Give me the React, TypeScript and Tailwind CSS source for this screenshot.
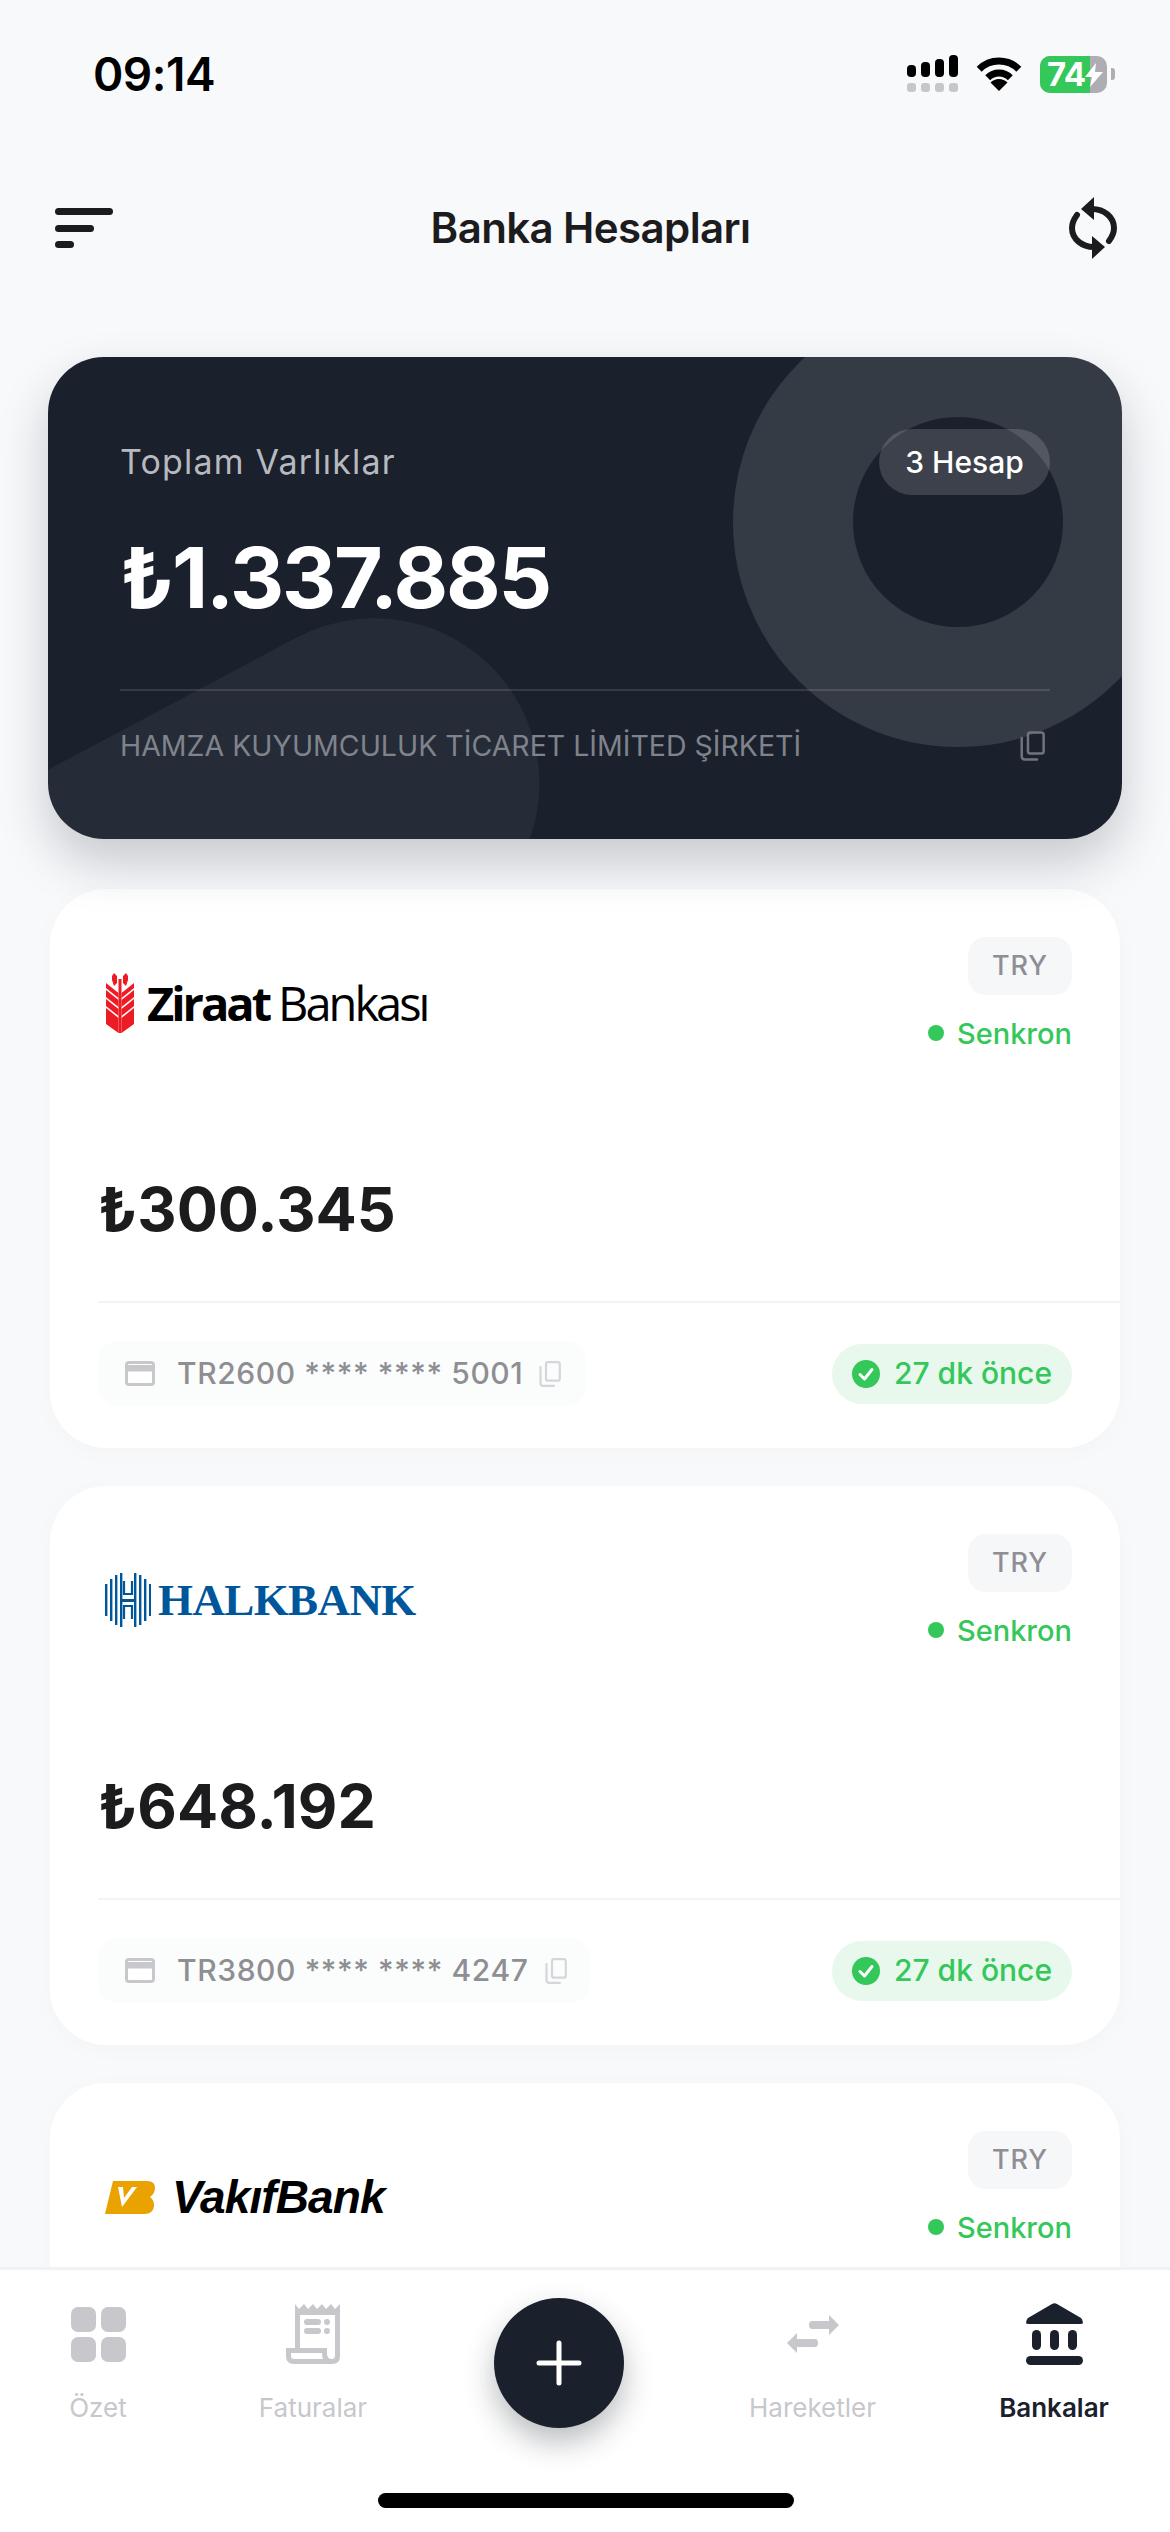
const inter = 'font-["Inter",sans-serif]';

function Signal() {
  return (
    <svg width="52" height="38" viewBox="0 0 52 38">
      <rect x="1" y="10" width="9" height="12" rx="4" fill="#000" />
      <rect x="15" y="7" width="9" height="15" rx="4" fill="#000" />
      <rect x="29" y="4" width="9" height="18" rx="4" fill="#000" />
      <rect x="43" y="0" width="9" height="22" rx="4" fill="#000" />
      <rect x="1" y="28" width="9" height="9" rx="3" fill="#c7c7c7" />
      <rect x="15" y="28" width="9" height="9" rx="3" fill="#c7c7c7" />
      <rect x="29" y="28" width="9" height="9" rx="3" fill="#c7c7c7" />
      <rect x="43" y="28" width="9" height="9" rx="3" fill="#c7c7c7" />
    </svg>
  );
}

function Wifi() {
  return (
    <svg width="48" height="36" viewBox="0 0 48 36">
      <path d="M4.2 13.2A28 28 0 0 1 43.8 13.2" fill="none" stroke="#000" strokeWidth="7" strokeLinecap="butt" />
      <path d="M12.7 21.7A16 16 0 0 1 35.3 21.7" fill="none" stroke="#000" strokeWidth="7" strokeLinecap="butt" />
      <path d="M24 35L15.5 26.5A12 12 0 0 1 32.5 26.5Z" fill="#000" />
    </svg>
  );
}

function Battery() {
  return (
    <div className="flex items-center gap-[4px]">
      <div className="relative h-[37px] w-[67px] overflow-hidden rounded-[10px] bg-[#aeaeb2]">
        <div className="flex h-full w-[50px] items-center bg-[#34c759] pl-[7px]">
          <span className={`${inter} text-[33px] font-bold leading-none tracking-[-0.5px] text-white`}>74</span>
        </div>
        <svg className="absolute left-[45px] top-[7px]" width="18" height="24" viewBox="0 0 18 24">
          <path d="M11 0L0 14H7L5 24L18 9H10Z" fill="#fff" />
        </svg>
      </div>
      <div className="h-[12px] w-[4px] rounded-r-[3px] bg-[#aeaeb2]" />
    </div>
  );
}

function MenuIcon() {
  return (
    <svg width="58" height="40" viewBox="0 0 58 40">
      <rect x="0" y="0" width="58" height="7" rx="3.5" fill="#1c1c1e" />
      <rect x="0" y="17" width="39" height="7" rx="3.5" fill="#1c1c1e" />
      <rect x="0" y="33" width="19" height="7" rx="3.5" fill="#1c1c1e" />
    </svg>
  );
}

function SyncIcon() {
  return (
    <svg width="50" height="62" viewBox="0 0 50 62">
      <path d="M24 12C36 12 46 20 46 31C46 36 44 40 41 44" fill="none" stroke="#1c1c1e" strokeWidth="6" strokeLinecap="round" />
      <path d="M26 50C14 50 4 42 4 31C4 26 6 22 9 18" fill="none" stroke="#1c1c1e" strokeWidth="6" strokeLinecap="round" />
      <path d="M26 0L13 12L26 23Z" fill="#1c1c1e" strokeLinejoin="round" />
      <path d="M24 39L37 50L24 62Z" fill="#1c1c1e" strokeLinejoin="round" />
    </svg>
  );
}

function CopyIcon({ color, w = 22, h = 26 }: { color: string; w?: number; h?: number }) {
  return (
    <svg width={w} height={h} viewBox="0 0 22 26" fill="none">
      <rect x="7" y="1.2" width="13.8" height="18.5" rx="2" stroke={color} strokeWidth="2.2" />
      <path d="M1.5 6V22C1.5 23.6 2.6 24.8 4.2 24.8H15" stroke={color} strokeWidth="2.2" strokeLinecap="round" />
    </svg>
  );
}

function CardIcon() {
  return (
    <svg width="30" height="25" viewBox="0 0 30 25">
      <rect x="1.5" y="1.5" width="27" height="22" rx="2.5" fill="#fff" stroke="#c7c7cc" strokeWidth="3" />
      <rect x="1.5" y="4" width="27" height="6.5" fill="#c7c7cc" />
    </svg>
  );
}

function CheckIcon() {
  return (
    <svg width="28" height="28" viewBox="0 0 28 28">
      <circle cx="14" cy="14" r="14" fill="#34c759" />
      <path d="M8 14.5L12.5 19L20 9.5" fill="none" stroke="#fff" strokeWidth="3" strokeLinecap="round" strokeLinejoin="round" />
    </svg>
  );
}

function ZiraatLogo() {
  return (
    <div className="flex h-[60px] w-[288px] items-center">
      <svg className="ml-[8px] shrink-0" width="28" height="60" viewBox="0 0 28 60">
        <path d="M8 0L11 3V10L8 13L6 7V3Z M20 0L17 3V10L20 13L22 7V3Z" fill="#ed1c24" />
        <path d="M0 10L12.5 20V25L0 15Z M28 10L15.5 20V25L28 15Z" fill="#ed1c24" />
        <path d="M0 17L12.5 27V34L0 24Z M28 17L15.5 27V34L28 24Z" fill="#ed1c24" />
        <path d="M0 26L12.5 36V43L0 33Z M28 26L15.5 36V43L28 33Z" fill="#ed1c24" />
        <path d="M0 35L12.5 45V60L0 51Z M28 35L15.5 45V60L28 51Z" fill="#ed1c24" />
        <rect x="12.5" y="6" width="3" height="54" fill="#ed1c24" />
      </svg>
      <span className="ml-[13px] whitespace-nowrap font-['Open_Sans',sans-serif] text-[47px] leading-none tracking-[-3px] text-black">
        <span className="font-bold">Ziraat</span>
        <span className="ml-[9px] font-normal">Bankası</span>
      </span>
    </div>
  );
}

function HalkMark() {
  const bars = [
    [0, 16, 38], [5, 11, 48], [10, 7, 47], [15, 2, 52],
    [30, 2, 52], [35, 7, 47], [40, 11, 48], [45, 16, 38],
  ];
  return (
    <svg className="shrink-0" width="46" height="54" viewBox="0 0 46 54">
      {[[0, 11, 32], [5, 6, 42], [10, 2, 50], [15, 0, 54], [29, 0, 54], [34, 2, 50], [39, 6, 42], [44, 11, 32]].map(([x, y, h], i) => (
        <rect key={i} x={x} y={y} width="2.4" height={h} fill="#00569b" />
      ))}
      <rect x="15" y="26" width="16" height="3" fill="#00569b" />
      <path d="M19 8V21H27V8" fill="none" stroke="#00569b" strokeWidth="2.2" />
      <path d="M19 46V33H27V46" fill="none" stroke="#00569b" strokeWidth="2.2" />
      {bars.length === 0 ? null : null}
    </svg>
  );
}

function HalkLogo() {
  return (
    <div className="flex h-[60px] w-[288px] items-center pl-[7px]">
      <HalkMark />
      <span className="ml-[7px] whitespace-nowrap font-['Liberation_Serif',serif] text-[45px] font-bold leading-none tracking-[-0.6px] text-[#00569b]">
        HALKBANK
      </span>
    </div>
  );
}

function VakifLogo() {
  return (
    <div className="flex h-[60px] w-[288px] items-center pl-[7px]">
      <svg className="shrink-0" width="50" height="33" viewBox="0 0 50 33">
        <path d="M8 0H42C48 0 50 3 50 7C50 11 48 14 45 16C48 18 49 21 49 24C49 30 45 33 39 33H0Z" fill="#e9a200" />
        <path d="M13 6L17 26L32 6H27L19 17L18 6Z" fill="#fff" />
      </svg>
      <span className="ml-[17px] whitespace-nowrap font-['Liberation_Sans',sans-serif] text-[46px] font-bold italic leading-none tracking-[-0.9px] text-black">
        VakıfBank
      </span>
    </div>
  );
}

function BankCard({
  logo,
  amount,
  iban,
  chipClass,
}: {
  logo: React.ReactNode;
  amount: string;
  iban: string;
  chipClass: string;
}) {
  return (
    <div className="rounded-[56px] bg-white pb-[42px] pl-[48px] pr-[48px] pt-[48px] shadow-[0_4px_24px_rgba(0,0,0,0.025)]">
      <div className="flex items-start justify-between">
        <div className="mt-[36px]">{logo}</div>
        <div className="flex flex-col items-end">
          <div className={`${inter} flex h-[58px] w-[104px] items-center justify-center rounded-[18px] bg-[#f6f7f9] text-[27px] font-medium tracking-[1px] text-[#8e8e93]`}>
            TRY
          </div>
          <div className="mt-[20px] flex h-[36px] items-center gap-[13px]">
            <span className="h-[16px] w-[16px] rounded-full bg-[#34c759]" />
            <span className={`${inter} text-[29px] font-medium leading-none text-[#34c759]`}>Senkron</span>
          </div>
        </div>
      </div>
      <div className={`${inter} mt-[122px] text-[61px] font-bold leading-[72px] text-[#1c1c1e]`}>{amount}</div>
      <div className="mr-[-48px] mt-[56px] h-[2px] bg-[#f3f4f6]" />
      <div className="mt-[38px] flex items-center justify-between">
        <div className={`flex h-[65px] items-center rounded-[20px] bg-[#fbfcfc] pl-[27px] ${chipClass}`}>
          <CardIcon />
          <span className={`${inter} ml-[22px] whitespace-nowrap text-[30px] font-medium tracking-[0.6px] text-[#8e8e93]`}>{iban}</span>
          <span className="ml-[16px]">
            <CopyIcon color="#d6d6da" />
          </span>
        </div>
        <div className="flex h-[60px] w-[240px] items-center justify-center gap-[14px] rounded-[30px] bg-[#e8f8ed]">
          <CheckIcon />
          <span className={`${inter} whitespace-nowrap text-[30px] font-medium text-[#34c759]`}>27 dk önce</span>
        </div>
      </div>
    </div>
  );
}

function NavLabel({ children, active }: { children: React.ReactNode; active?: boolean }) {
  return (
    <span className={`${inter} mt-[20px] whitespace-nowrap text-[26px] leading-[36px] ${active ? "font-semibold text-[#1a202c]" : "font-normal text-[#c7c7cc]"}`}>
      {children}
    </span>
  );
}

export default function App() {
  return (
    <div className={`${inter} flex h-[2532px] w-[1170px] flex-col overflow-hidden bg-[#f8f9fb]`}>
      {/* Status bar */}
      <div className="flex h-[148px] shrink-0 items-center justify-between pl-[93px] pr-[55px]">
        <span className="text-[46px] font-semibold leading-none tracking-[-0.5px] text-black">09:14</span>
        <div className="flex items-center">
          <Signal />
          <div className="ml-[17px]"><Wifi /></div>
          <div className="ml-[17px]"><Battery /></div>
        </div>
      </div>
      {/* Header */}
      <div className="flex h-[160px] shrink-0 items-center justify-between pl-[55px] pr-[52px]">
        <MenuIcon />
        <span className="text-[42px] font-semibold leading-none tracking-[-0.6px] text-[#1c1c1e]">Banka Hesapları</span>
        <SyncIcon />
      </div>
      {/* Scrolling content */}
      <div className="min-h-0 flex-1 overflow-hidden">
        {/* Hero */}
        <div className="relative z-10 mx-[48px] mt-[49px] h-[482px] overflow-visible rounded-[56px] shadow-[0_24px_50px_rgba(26,32,44,0.22)]">
          <div className="relative h-full overflow-hidden rounded-[56px] bg-[#1a202c] px-[72px] pt-[72px]">
            <div className="absolute left-[685px] top-[-60px] h-[450px] w-[450px] rounded-full border-[120px] border-white/12" />
            <div className="absolute left-[-187px] top-[348px] h-[330px] w-[700px] rotate-[-28deg] rounded-full bg-white/5" />
            <div className="relative">
              <div className="flex items-center justify-between">
                <span className="text-[34px] font-normal leading-none tracking-[1.2px] text-[#b7b9be]">Toplam Varlıklar</span>
                <span className="flex h-[66px] w-[171px] items-center justify-center rounded-[33px] bg-white/15 text-[30px] font-medium text-white">3 Hesap</span>
              </div>
              <div className="mt-[33px] text-[84px] font-bold leading-[100px] tracking-[-2.2px] text-white">₺1.337.885</div>
              <div className="mt-[61px] h-[2px] bg-white/12" />
              <div className="mt-[35px] flex h-[40px] items-center justify-between pr-[5px]">
                <span className="text-[28.5px] font-normal leading-none text-[#7f838b]">HAMZA KUYUMCULUK TİCARET LİMİTED ŞİRKETİ</span>
                <CopyIcon color="#6f737c" w={25} h={30} />
              </div>
            </div>
          </div>
        </div>
        {/* Cards */}
        <div className="mx-[50px] mt-[50px] flex flex-col gap-[38px]">
          <BankCard logo={<ZiraatLogo />} amount="₺300.345" iban="TR2600 **** **** 5001" chipClass="w-[488px]" />
          <BankCard logo={<HalkLogo />} amount="₺648.192" iban="TR3800 **** **** 4247" chipClass="w-[492px]" />
          <BankCard logo={<VakifLogo />} amount="₺0" iban="TR0000 **** **** 0000" chipClass="w-[488px]" />
        </div>
      </div>
      {/* Bottom nav */}
      <div className="relative z-20 h-[265px] shrink-0 border-t-[3px] border-[#f1f2f4] bg-white">
        <div className="flex items-start gap-[126px] pl-[64px] pt-[28px]">
          <div className="flex w-[68px] flex-col items-center">
            <div className="flex h-[72px] items-center">
              <div className="grid grid-cols-2 gap-[5px]">
                <span className="h-[25px] w-[25px] rounded-[7px] bg-[#c7c7cc]" />
                <span className="h-[25px] w-[25px] rounded-[7px] bg-[#c7c7cc]" />
                <span className="h-[25px] w-[25px] rounded-[7px] bg-[#c7c7cc]" />
                <span className="h-[25px] w-[25px] rounded-[7px] bg-[#c7c7cc]" />
              </div>
            </div>
            <NavLabel>Özet</NavLabel>
          </div>
          <div className="flex w-[110px] flex-col items-center">
            <div className="flex h-[72px] items-center">
              <svg width="54" height="60" viewBox="0 0 54 60">
                <path
                  fillRule="evenodd"
                  fill="#c7c7cc"
                  d="M9 0L13 5L18 0L22 5L27 0L31 5L36 0L40 5L45 0L49 5L54 0V52Q54 60 46 60H8Q0 60 0 52V44H9ZM14 11V44H41V50Q41 55 46 55Q49 55 49 51V11ZM5 49V52Q5 55 8 55H37Q36 53 36 49Z"
                />
                <rect x="18" y="15" width="17" height="6" rx="3" fill="#c7c7cc" />
                <rect x="38" y="15" width="6" height="6" rx="3" fill="#c7c7cc" />
                <rect x="18" y="24" width="17" height="6" rx="3" fill="#c7c7cc" />
                <rect x="38" y="24" width="6" height="6" rx="3" fill="#c7c7cc" />
              </svg>
            </div>
            <NavLabel>Faturalar</NavLabel>
          </div>
          <div className="flex h-[130px] w-[130px] items-center justify-center rounded-full bg-[#1a202c] shadow-[0_14px_30px_rgba(26,32,44,0.3)]">
            <svg width="46" height="46" viewBox="0 0 46 46">
              <path d="M23 3V43M3 23H43" stroke="#fff" strokeWidth="5" strokeLinecap="round" />
            </svg>
          </div>
          <div className="flex w-[125px] flex-col items-center">
            <div className="flex h-[72px] items-center">
              <svg width="52" height="38" viewBox="0 0 52 38">
                <path d="M42 0L52 10L42 20V14H25Q22 14 22 10Q22 6 25 6H42Z" fill="#c7c7cc" />
                <path d="M10 18L0 28L10 38V32H28Q31 32 31 28Q31 24 28 24H10Z" fill="#c7c7cc" />
              </svg>
            </div>
            <NavLabel>Hareketler</NavLabel>
          </div>
          <div className="flex w-[106px] flex-col items-center">
            <div className="flex h-[72px] items-center">
              <svg width="57" height="62" viewBox="0 0 57 62">
                <path d="M26 1L2 15Q0 17 0 20Q0 21 3 21H54Q57 21 57 20Q57 17 55 15L31 1Q28.500 -0.500 26 1Z" fill="#1a202c" />
                <rect x="6" y="27" width="9" height="20" rx="4.500" fill="#1a202c" />
                <rect x="24" y="27" width="9" height="20" rx="4.500" fill="#1a202c" />
                <rect x="42" y="27" width="9" height="20" rx="4.500" fill="#1a202c" />
                <rect x="0" y="53" width="57" height="9" rx="4.500" fill="#1a202c" />
              </svg>
            </div>
            <NavLabel active>Bankalar</NavLabel>
          </div>
        </div>
        <div className="absolute bottom-[24px] left-[378px] h-[15px] w-[416px] rounded-full bg-black" />
      </div>
    </div>
  );
}
